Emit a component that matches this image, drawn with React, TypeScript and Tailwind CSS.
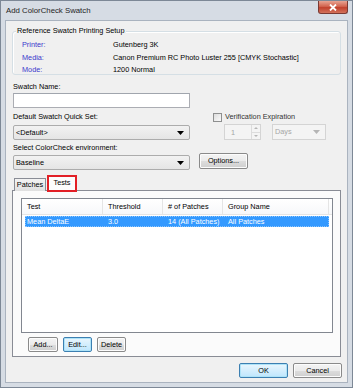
import React from "react";

const Arrow = ({ color = "#000" }: { color?: string }) => (
  <svg width="7" height="4" viewBox="0 0 7 4">
    <path d="M0 0 L7 0 L3.5 4 Z" fill={color} />
  </svg>
);

const Btn = ({ children, w, focus }: { children: React.ReactNode; w: string; focus?: boolean }) => (
  <div
    className={`${w} flex items-center justify-center rounded-[2px] border ${
      focus
        ? "border-[#3c7fb1] bg-[linear-gradient(#eaf6fd,#bee6fd)] shadow-[inset_0_0_0_1px_#aee3f8]"
        : "border-[#8a8a8a] bg-[linear-gradient(#f4f4f4_0%,#ebebeb_50%,#dddddd_51%,#cfcfcf_100%)] shadow-[inset_0_0_0_1px_#fcfcfc]"
    }`}
  >
    {children}
  </div>
);

const Select = ({ text, w }: { text: string; w: string }) => (
  <div className={`${w} h-[15px] flex items-center justify-between border border-[#acacac] rounded-[2px] bg-[linear-gradient(#f2f2f2,#e5e5e5)] pl-[2px] pr-[5px]`}>
    <span>{text}</span>
    <Arrow />
  </div>
);

export default function App() {
  return (
    <div className="w-[353px] h-[388px] bg-[#d6dce4] border border-[#7d8896] flex flex-col font-['Liberation_Sans',Arial,sans-serif] text-[7.3px] text-black leading-[10px] overflow-hidden">
      {/* Title bar */}
      <div className="h-[19px] flex items-start justify-between shrink-0">
        <div className="pl-[5px] pt-[5px] text-[7.8px] text-[#1e1e1e]">Add ColorCheck Swatch</div>
        <div className="mr-[4px] w-[30px] h-[13px] rounded-b-[3px] border border-t-0 border-[#7a3a33] bg-[linear-gradient(#e8a493_0%,#d2644f_45%,#c1412d_55%,#d3725b_100%)] flex items-center justify-center">
          <svg width="8" height="7" viewBox="0 0 8 7">
            <path d="M1 0.5 L7 6.5 M7 0.5 L1 6.5" stroke="#fff" strokeWidth="1.8" />
          </svg>
        </div>
      </div>

      {/* Client area */}
      <div className="mx-[4px] mb-[4px] flex-1 bg-[#f0f0f0] border border-[#aab3bf] flex flex-col">
        {/* Group box */}
        <div className="relative mt-[10px] ml-[6px] w-[329px] h-[44px] border border-[#d5dfe5] rounded-[3px] shadow-[inset_1px_1px_0_#fff] shrink-0">
          <div className="absolute left-[3px] top-[-6px] bg-[#f0f0f0] px-[1px]">Reference Swatch Printing Setup</div>
          <div className="pt-[8px] pl-[9px] flex flex-col gap-[2.5px]">
            {[
              ["Printer:", "Gutenberg 3K"],
              ["Media:", "Canon Premium RC Photo Luster 255 [CMYK Stochastic]"],
              ["Mode:", "1200 Normal"],
            ].map(([l, v]) => (
              <div key={l} className="flex">
                <div className="w-[91px] text-[#3a3acc]">{l}</div>
                <div>{v}</div>
              </div>
            ))}
          </div>
        </div>

        {/* Swatch name */}
        <div className="mt-[7px] ml-[7px]">Swatch Name:</div>
        <div className="mt-[1px] ml-[7px] w-[177px] h-[15px] bg-white border border-[#abadb3] border-t-[#a0a5ad]" />

        {/* Quick set row */}
        <div className="mt-[4px] flex">
          <div className="ml-[7px] w-[177px] flex flex-col">
            <div>Default Swatch Quick Set:</div>
            <div className="mt-[3px]">
              <Select text="<Default>" w="w-[177px]" />
            </div>
          </div>
          <div className="ml-[23px] flex flex-col">
            <div className="flex items-center">
              <div className="w-[9px] h-[9px] border border-[#8e8f8f] bg-[linear-gradient(135deg,#dcdcdc,#fafafa)]" />
              <span className="ml-[3px] text-[#333]">Verification Expiration</span>
            </div>
            <div className="mt-[2px] ml-[11px] flex">
              <div className="w-[37px] h-[16px] border border-[#d4d4d4] bg-[#f4f4f4] flex">
                <div className="flex-1 pl-[6px] pt-[3px] text-[#a6a6a6]">1</div>
                <div className="w-[9px] flex flex-col border-l border-[#dcdcdc]">
                  <div className="flex-1 flex items-center justify-center border-b border-[#dcdcdc]">
                    <svg width="4" height="2" viewBox="0 0 4 2"><path d="M0 2 L4 2 L2 0 Z" fill="#b5b5b5" /></svg>
                  </div>
                  <div className="flex-1 flex items-center justify-center">
                    <svg width="4" height="2" viewBox="0 0 4 2"><path d="M0 0 L4 0 L2 2 Z" fill="#b5b5b5" /></svg>
                  </div>
                </div>
              </div>
              <div className="ml-[11px] w-[54px] h-[16px] border border-[#d4d4d4] bg-[#f4f4f4] flex items-center justify-between pl-[2px] pr-[5px] text-[#a6a6a6]">
                <span>Days</span>
                <Arrow color="#b5b5b5" />
              </div>
            </div>
          </div>
        </div>

        {/* Environment */}
        <div className="mt-[3px] ml-[7px]">Select ColorCheck environment:</div>
        <div className="ml-[7px] flex items-start">
          <div className="mt-[2px]">
            <Select text="Baseline" w="w-[177px]" />
          </div>
          <div className="ml-[9px]">
            <Btn w="w-[49px] h-[16px]">Options...</Btn>
          </div>
        </div>

        {/* Tabs */}
        <div className="mt-[5px] ml-[8px] flex items-end h-[17px] relative z-10">
          <div className="w-[32px] h-[13px] border border-b-0 border-[#898c95] bg-[linear-gradient(#f3f3f3,#e0e0e0)] flex items-center justify-center mb-[1px]">
            Patches
          </div>
          <div className="ml-[1px] w-[30px] h-[17px] border-2 border-[#e21f26] bg-[#fcfcfc] flex items-start justify-center pt-[1px]">
            Tests
          </div>
        </div>
        <div className="ml-[6px] w-[329px] h-[167px] border border-[#898c95] bg-[#fbfbfb] flex flex-col -mt-[2px] shrink-0">
          {/* list view */}
          <div className="mt-[7px] ml-[8px] w-[312px] h-[135px] border border-[#828790] bg-white flex flex-col">
            <div className="h-[16px] flex border-b border-[#e5e5e5] bg-[linear-gradient(#ffffff,#f7f8fa)]">
              {[
                ["Test", "w-[81px]"],
                ["Threshold", "w-[60px]"],
                ["# of Patches", "w-[60px]"],
                ["Group Name", "w-[106px]"],
              ].map(([t, w]) => (
                <div key={t} className={`${w} pl-[5px] flex items-center border-r border-[#e5e5e5]`}>
                  {t}
                </div>
              ))}
            </div>
            <div className="mt-[1px] ml-[3px] w-[304px] h-[11px] bg-[#3399ff] border border-dotted border-[#8cc6ff] text-white flex items-center">
              <div className="w-[77px] pl-[1px]">Mean DeltaE</div>
              <div className="w-[60px] pl-[5px]">3.0</div>
              <div className="w-[60px] pl-[5px]">14 (All Patches)</div>
              <div className="pl-[5px]">All Patches</div>
            </div>
          </div>
          <div className="mt-[4px] ml-[15px] flex gap-[5px]">
            <Btn w="w-[30px] h-[15px]">Add...</Btn>
            <Btn w="w-[29px] h-[15px]" focus>Edit...</Btn>
            <Btn w="w-[29px] h-[15px]">Delete</Btn>
          </div>
        </div>

        {/* OK / Cancel */}
        <div className="mt-[6px] ml-[233px] flex gap-[5px]">
          <Btn w="w-[49px] h-[15px]" focus>OK</Btn>
          <Btn w="w-[49px] h-[15px]">Cancel</Btn>
        </div>
      </div>
    </div>
  );
}
